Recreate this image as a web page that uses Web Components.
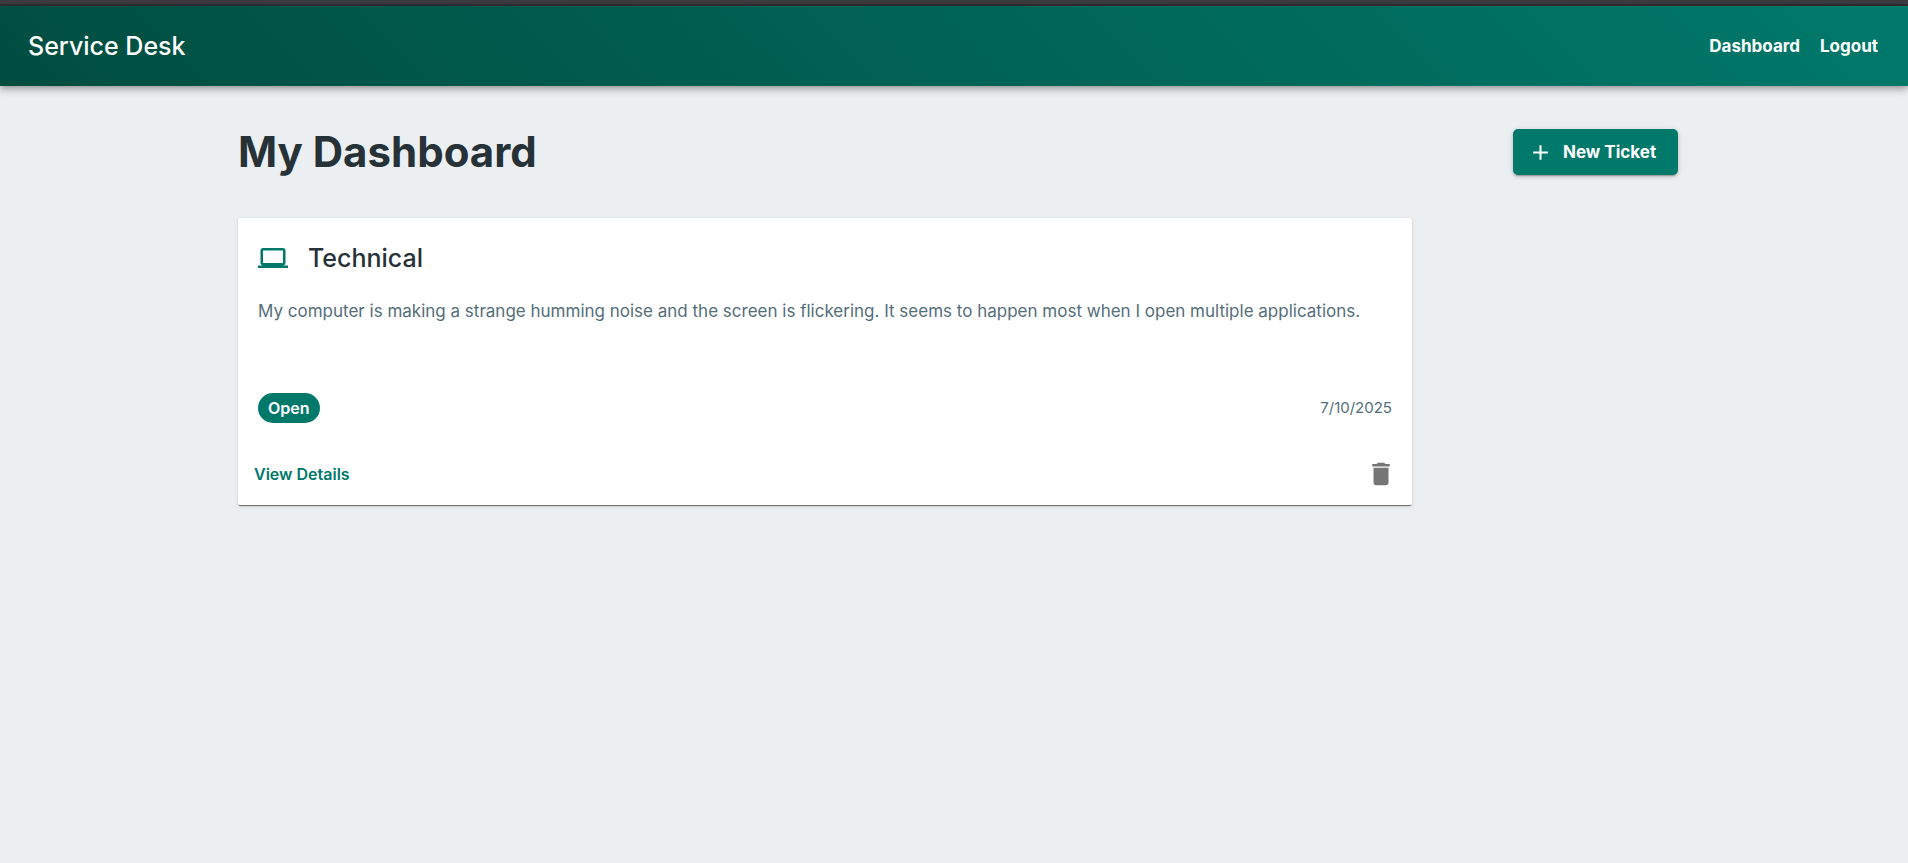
<!DOCTYPE html>
<html lang="en">
<head>
<meta charset="utf-8">
<title>Service Desk</title>
<style>
  body {
    margin: 0;
    background: #eceff1;
    color: #263238;
    font-family: Inter, "Liberation Sans", sans-serif;
    --accent: #00796b;
    --muted: #546e7a;
  }
</style>
</head>
<body>
<service-app></service-app>

<script>
const define = (name, html) => {
  const tpl = document.createElement('template');
  tpl.innerHTML = html;
  customElements.define(name, class extends HTMLElement {
    constructor() {
      super();
      this.attachShadow({ mode: 'open' }).append(tpl.content.cloneNode(true));
    }
  });
};

define('app-bar', `
  <style>
    :host { display: block; }
    .edge { height: 4px; background: #3c3b40; border-bottom: 2px solid #2f2f33; }
    header {
      display: flex; align-items: center; justify-content: space-between;
      height: 80px; padding: 0 30px 0 28px; box-sizing: border-box;
      color: #fff;
      background: linear-gradient(45deg, #004d40, #00796b);
      box-shadow: 0 2px 5px -1px rgba(0,0,0,.2), 0 5px 6px rgba(0,0,0,.14), 0 1px 12px rgba(0,0,0,.12);
    }
    .brand { font-size: 25px; font-weight: 500; line-height: 40px; }
    nav { display: flex; gap: 20px; }
  </style>
  <div class="edge"></div>
  <header>
    <span class="brand"><slot name="brand"></slot></span>
    <nav aria-label="Main"><slot></slot></nav>
  </header>`);

define('nav-link', `
  <style>
    :host { display: block; }
    a { color: inherit; text-decoration: none; font-size: 17px; font-weight: 700; line-height: 30px; }
  </style>
  <a href="#"><slot></slot></a>`);

define('new-ticket-button', `
  <style>
    :host { display: block; }
    button {
      display: flex; align-items: center; gap: 10px;
      height: 46px; min-width: 165px; padding: 0 18px 0 15px; border: 0; border-radius: 5px;
      background: var(--accent); color: #fff;
      font: 700 17px/30px Inter, "Liberation Sans", sans-serif;
      box-shadow: 0 3px 1px -2px rgba(0,0,0,.2), 0 2px 3px rgba(0,0,0,.14), 0 1px 6px rgba(0,0,0,.12);
    }
    svg { width: 25px; height: 25px; fill: currentColor; }
  </style>
  <button type="button">
    <svg viewBox="0 0 24 24" aria-hidden="true"><path d="M19 13h-6v6h-2v-6H5v-2h6V5h2v6h6v2z"/></svg>
    <slot></slot>
  </button>`);

define('status-chip', `
  <style>
    :host {
      display: inline-flex; align-items: center; height: 30px; padding: 0 10px;
      border-radius: 15px; background: var(--accent); color: #fff;
      font-size: 16px; font-weight: 600; line-height: 24px;
    }
  </style>
  <slot></slot>`);

define('ticket-card', `
  <style>
    :host {
      display: flex; flex-direction: column; max-width: 1174px;
      background: #fff; border-radius: 2px; box-sizing: border-box;
      box-shadow: 0 2px 1px -1px rgba(0,0,0,.45), 0 1px 1px rgba(0,0,0,.14), 0 1px 4px rgba(0,0,0,.12);
    }
    .content { padding: 20px; }
    .title { display: flex; align-items: center; gap: 20px; margin-bottom: 20px; }
    .title svg { width: 30px; height: 30px; fill: var(--accent); }
    h2 { margin: 0; font-size: 25px; font-weight: 500; line-height: 40px; }
    p { margin: 0; min-height: 75px; font-size: 17px; line-height: 26px; color: var(--muted); }
    .meta { display: flex; align-items: center; justify-content: space-between; margin-top: 20px; }
    .date { font-size: 15px; line-height: 24px; color: var(--muted); }
    footer { display: flex; align-items: center; justify-content: space-between; padding: 10px; }
    footer a { padding: 5px 6px; font-size: 16px; font-weight: 600; line-height: 28px; color: var(--accent); text-decoration: none; }
    footer button { display: flex; padding: 6px; border: 0; background: none; color: #757575; }
    footer svg { width: 30px; height: 30px; fill: currentColor; }
  </style>
  <div class="content">
    <div class="title">
      <svg viewBox="0 0 24 24" aria-hidden="true"><path d="M20 18c1.100 0 1.990-.9 1.990-2L22 6c0-1.100-.9-2-2-2H4c-1.100 0-2 .9-2 2v10c0 1.100.9 2 2 2H0v2h24v-2h-4zM4 6h16v10H4V6z"/></svg>
      <h2><slot name="title"></slot></h2>
    </div>
    <p><slot></slot></p>
    <div class="meta">
      <status-chip><slot name="status"></slot></status-chip>
      <span class="date"><slot name="date"></slot></span>
    </div>
  </div>
  <footer>
    <a href="#">View Details</a>
    <button type="button" aria-label="Delete ticket">
      <svg viewBox="0 0 24 24" aria-hidden="true"><path d="M6 19c0 1.100.9 2 2 2h8c1.100 0 2-.9 2-2V7H6v12zM19 4h-3.500l-1-1h-5l-1 1H5v2h14V4z"/></svg>
    </button>
  </footer>`);

define('dashboard-page', `
  <style>
    :host { display: block; max-width: 1440px; margin: 0 auto; padding: 40px 0 40px 8px; }
    .head { display: flex; align-items: center; justify-content: space-between; margin-bottom: 40px; }
    h1 { margin: 0; font-size: 42px; font-weight: 700; line-height: 52px; }
  </style>
  <div class="head">
    <h1><slot name="heading"></slot></h1>
    <slot name="action"></slot>
  </div>
  <slot></slot>`);

define('service-app', `
  <style>:host { display: block; }</style>
  <app-bar>
    <span slot="brand">Service Desk</span>
    <nav-link>Dashboard</nav-link>
    <nav-link>Logout</nav-link>
  </app-bar>
  <dashboard-page>
    <span slot="heading">My Dashboard</span>
    <new-ticket-button slot="action">New Ticket</new-ticket-button>
    <ticket-card>
      <span slot="title">Technical</span>
      My computer is making a strange humming noise and the screen is flickering. It seems to happen most when I open multiple applications.
      <span slot="status">Open</span>
      <span slot="date">7/10/2025</span>
    </ticket-card>
  </dashboard-page>`);
</script>
</body>
</html>
